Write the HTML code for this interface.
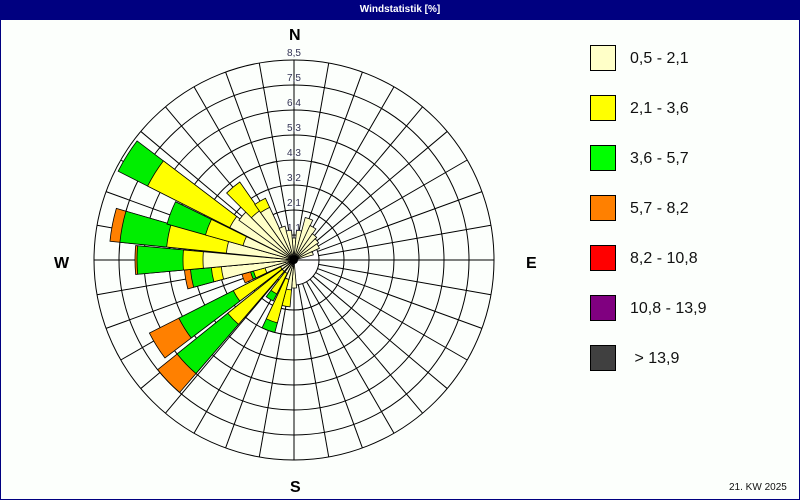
<!DOCTYPE html>
<html><head><meta charset="utf-8"><style>
html,body{margin:0;padding:0;background:#fff}
#w{position:relative;width:800px;height:500px;overflow:hidden;font-family:"Liberation Sans",sans-serif;background:#fcfffc}
#t{position:absolute;left:0;top:0;width:800px;height:20px;background:#000080;color:#fff;font-size:10px;font-weight:bold;text-align:center;line-height:20px}
#bl{position:absolute;left:0;top:0;width:798px;height:499px;border:1px solid #000080;border-top:none}
.lg{position:absolute;left:590px;width:24px;height:24px;border:1px solid #000}
.lt{position:absolute;left:630px;font-size:16px;color:#111}
svg{position:absolute;left:0;top:0}
</style></head><body><div id="w">
<svg width="800" height="500" id="s"></svg>
<div id="t">Windstatistik [%]</div>
<div id="bl"></div>
<div class="lg" style="top:45px;background:#ffffc8"></div><div class="lt" style="top:50px">0,5 - 2,1</div>
<div class="lg" style="top:95px;background:#ffff00"></div><div class="lt" style="top:100px">2,1 - 3,6</div>
<div class="lg" style="top:145px;background:#00ff00"></div><div class="lt" style="top:150px">3,6 - 5,7</div>
<div class="lg" style="top:195px;background:#ff8000"></div><div class="lt" style="top:200px">5,7 - 8,2</div>
<div class="lg" style="top:245px;background:#ff0000"></div><div class="lt" style="top:250px">8,2 - 10,8</div>
<div class="lg" style="top:295px;background:#800080"></div><div class="lt" style="top:300px">10,8 - 13,9</div>
<div class="lg" style="top:345px;background:#404040"></div><div class="lt" style="top:350px">&nbsp;&gt; 13,9</div>
<div style="position:absolute;left:729px;top:482px;font-size:10px;color:#111">21. KW 2025</div>
<div style="position:absolute;left:289px;top:27px;font-size:16px;font-weight:bold">N</div>
<div style="position:absolute;left:290px;top:479px;font-size:16px;font-weight:bold">S</div>
<div style="position:absolute;left:54px;top:255px;font-size:16px;font-weight:bold">W</div>
<div style="position:absolute;left:526px;top:255px;font-size:16px;font-weight:bold">E</div>
</div>
<script>
var s=document.getElementById('s'),cx=294,cy=260,h='';
function p(r,b){b=b*Math.PI/180;return (cx+r*Math.sin(b)).toFixed(2)+','+(cy-r*Math.cos(b)).toFixed(2);}
for(var r=50;r<=200;r+=25)h+='<circle cx="'+cx+'" cy="'+cy+'" r="'+r+'" fill="none" stroke="#000" stroke-width="1"/>';
h+='<circle cx="'+cx+'" cy="'+cy+'" r="25" fill="#fff" stroke="#000" stroke-width="1"/>';
for(var b=0;b<360;b+=10)h+='<line x1="'+p(25,b).split(',')[0]+'" y1="'+p(25,b).split(',')[1]+'" x2="'+p(200,b).split(',')[0]+'" y2="'+p(200,b).split(',')[1]+'" stroke="#000" stroke-width="1"/>';
h+='<line x1="94" y1="260" x2="494" y2="260" stroke="#000"/><line x1="294" y1="60" x2="294" y2="460" stroke="#000"/>';
var C=['#ffffc8','#ffff00','#00ee00','#ff8000'];
var D=[[0,[22]],[10,[30]],[20,[44]],[30,[38]],[40,[32]],[50,[30]],[60,[28]],[70,[20]],[180,[28]],[190,[30,47]],[200,[20,65,75]],[212,[15,38,46]],[226,[15,85,150,175]],[238,[15,68,129,162]],[250,[30,42,45,54]],[260,[73,83,104,110]],[270,[91,111,157,159]],[281,[68,128,175,185]],[291,[53,92,132]],[302,[72,164,197]],[311,[68]],[320,[60,95]],[330,[58,68]],[340,[35]],[350,[30]]];
var w=5.2;
D.forEach(function(d){var b=d[0],a=d[1];for(var i=a.length-1;i>=0;i--){var r=a[i];if(!r)continue;
h+='<path d="M'+cx+','+cy+' L'+p(r,b-w)+' A'+r+','+r+' 0 0 1 '+p(r,b+w)+' Z" fill="'+C[i]+'" stroke="#000" stroke-width="0.8"/>';}});
h+='<circle cx="'+cx+'" cy="'+cy+'" r="4" fill="#000"/>';
var L=['1,1','2,1','3,2','4,3','5,3','6,4','7,5','8,5'];
for(var i=0;i<8;i++)h+='<text x="294" y="'+(260-25*(i+1)-4)+'" text-anchor="middle" font-family="Liberation Sans, sans-serif" font-size="10" fill="#333355">'+L[i]+'</text>';
s.innerHTML=h;
</script>
</body></html>
